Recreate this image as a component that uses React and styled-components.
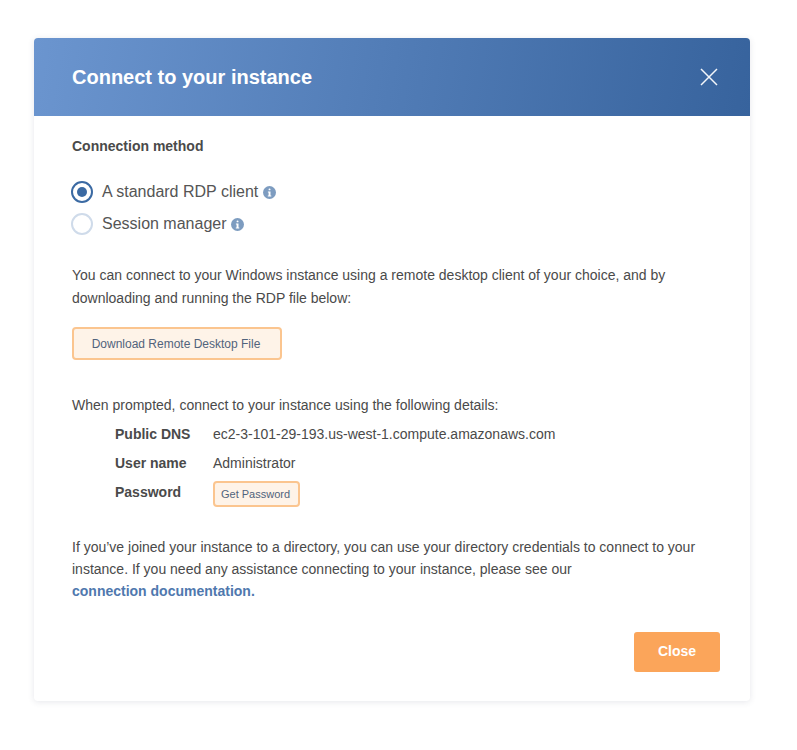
import React from 'react';
import styled, { createGlobalStyle } from 'styled-components';

const GlobalStyle = createGlobalStyle`
  html, body {
    margin: 0;
    padding: 0;
    background: #fff;
    font-family: "Liberation Sans", Arial, sans-serif;
  }
`;

const Page = styled.div`
  width: 797px;
  height: 750px;
  padding: 38px 47px 0 34px;
  box-sizing: border-box;
`;

const Modal = styled.div`
  width: 716px;
  height: 663px;
  border-radius: 4px;
  background: #fff;
  box-shadow: 0 1px 6px rgba(60, 70, 100, 0.13);
  overflow: hidden;
  display: flex;
  flex-direction: column;
`;

const Header = styled.header`
  height: 78px;
  flex: none;
  display: flex;
  align-items: center;
  justify-content: space-between;
  padding: 0 32px 0 38px;
  background: linear-gradient(100deg, #6b95cf 0%, #37639d 100%);
`;

const Title = styled.h1`
  margin: 0;
  font-size: 20px;
  font-weight: 700;
  color: #fff;
`;

const CloseIcon = styled.button`
  border: 0;
  padding: 0;
  background: none;
  width: 18px;
  height: 18px;
  display: block;
  svg {
    display: block;
  }
`;

const Body = styled.div`
  flex: 1;
  display: flex;
  flex-direction: column;
  padding: 21px 30px 0 38px;
  color: #4a4a4a;
  font-size: 14px;
`;

const SectionLabel = styled.div`
  font-size: 14px;
  line-height: 18px;
  font-weight: 700;
  color: #4a4a4a;
`;

const RadioGroup = styled.div`
  display: flex;
  flex-direction: column;
  gap: 10px;
  margin-top: 26px;
`;

const RadioRow = styled.label`
  display: flex;
  align-items: center;
  height: 22px;
  font-size: 16px;
  color: #555;
`;

const RadioCircle = styled.span`
  width: 22px;
  height: 22px;
  margin-left: -1px;
  margin-right: 9px;
  box-sizing: border-box;
  border-radius: 50%;
  border: 2px solid ${p => (p.$on ? '#3b6aa3' : '#cfdbea')};
  display: flex;
  align-items: center;
  justify-content: center;
  &::after {
    content: '';
    display: ${p => (p.$on ? 'block' : 'none')};
    width: 10px;
    height: 10px;
    border-radius: 50%;
    background: #3b6aa3;
  }
`;

const InfoBadge = styled.svg`
  margin-left: 4.6px;
  width: 13px;
  height: 13px;
  display: block;
`;

const Paragraph = styled.p`
  margin: ${p => p.$top || 0}px 0 0;
  font-size: 14px;
  line-height: ${p => p.$lh || 22.5}px;
  color: #4a4a4a;
`;

const OutlineButton = styled.button`
  display: block;
  box-sizing: border-box;
  border: 2px solid #fbc58f;
  border-radius: 4px;
  background: #fef3e8;
  color: #51637c;
  font-family: inherit;
  padding: 0 2px 0 0;
  width: ${p => p.$w}px;
  height: ${p => p.$h}px;
  font-size: ${p => p.$size}px;
`;

const PasswordButton = styled(OutlineButton)`
  margin-top: 4px;
`;

const DownloadRow = styled.div`
  margin-top: 18px;
`;

const Details = styled.div`
  display: grid;
  grid-template-columns: 98px auto;
  grid-auto-rows: 29px;
  align-items: center;
  justify-content: start;
  margin: 3px 0 0 43px;
`;

const DetailKey = styled.div`
  font-weight: 700;
  font-size: 14px;
  color: #4a4a4a;
`;

const DetailValue = styled.div`
  font-size: 14px;
  color: #4a4a4a;
`;

const DocLink = styled.a`
  font-weight: 700;
  color: #4f78ae;
  text-decoration: none;
`;

const Footer = styled.div`
  display: flex;
  justify-content: flex-end;
  margin-top: 30px;
`;

const CloseButton = styled.button`
  width: 86px;
  height: 40px;
  border: 0;
  border-radius: 3px;
  background: #fba55a;
  color: #fff;
  font-family: inherit;
  font-size: 14px;
  font-weight: 700;
  padding: 0 0 2px;
`;

function Info() {
  return (
    <InfoBadge viewBox="0 0 13 13">
      <circle cx="6.5" cy="6.5" r="6.5" fill="#7d9cc0" />
      <rect x="5.6" y="2.4" width="1.9" height="1.9" rx="0.9" fill="#fff" />
      <path d="M4.9 5.4h2.6v4.2h.8v1H4.8v-1h.8V6.4h-.7z" fill="#fff" />
    </InfoBadge>
  );
}

export default function App() {
  return (
    <Page>
      <GlobalStyle />
      <Modal>
        <Header>
          <Title>Connect to your instance</Title>
          <CloseIcon aria-label="Close">
            <svg width="18" height="18" viewBox="0 0 18 18">
              <path d="M1 1l16 16M17 1L1 17" stroke="#f3f6fa" strokeWidth="1.5" fill="none" />
            </svg>
          </CloseIcon>
        </Header>
        <Body>
          <SectionLabel>Connection method</SectionLabel>
          <RadioGroup>
            <RadioRow>
              <RadioCircle $on />
              A standard RDP client
              <Info />
            </RadioRow>
            <RadioRow>
              <RadioCircle />
              Session manager
              <Info />
            </RadioRow>
          </RadioGroup>
          <Paragraph $top={29}>
            You can connect to your Windows instance using a remote desktop client of your choice, and by
            <br />
            downloading and running the RDP file below:
          </Paragraph>
          <DownloadRow>
            <OutlineButton $w={210} $h={33} $size={12}>Download Remote Desktop File</OutlineButton>
          </DownloadRow>
          <Paragraph $top={34}>When prompted, connect to your instance using the following details:</Paragraph>
          <Details>
            <DetailKey>Public DNS</DetailKey>
            <DetailValue>ec2-3-101-29-193.us-west-1.compute.amazonaws.com</DetailValue>
            <DetailKey>User name</DetailKey>
            <DetailValue>Administrator</DetailValue>
            <DetailKey>Password</DetailKey>
            <DetailValue>
              <PasswordButton $w={87} $h={26} $size={11}>Get Password</PasswordButton>
            </DetailValue>
          </Details>
          <Paragraph $top={29} $lh={22}>
            If you’ve joined your instance to a directory, you can use your directory credentials to connect to your
            <br />
            instance. If you need any assistance connecting to your instance, please see our
            <br />
            <DocLink href="#">connection documentation.</DocLink>
          </Paragraph>
          <Footer>
            <CloseButton>Close</CloseButton>
          </Footer>
        </Body>
      </Modal>
    </Page>
  );
}
